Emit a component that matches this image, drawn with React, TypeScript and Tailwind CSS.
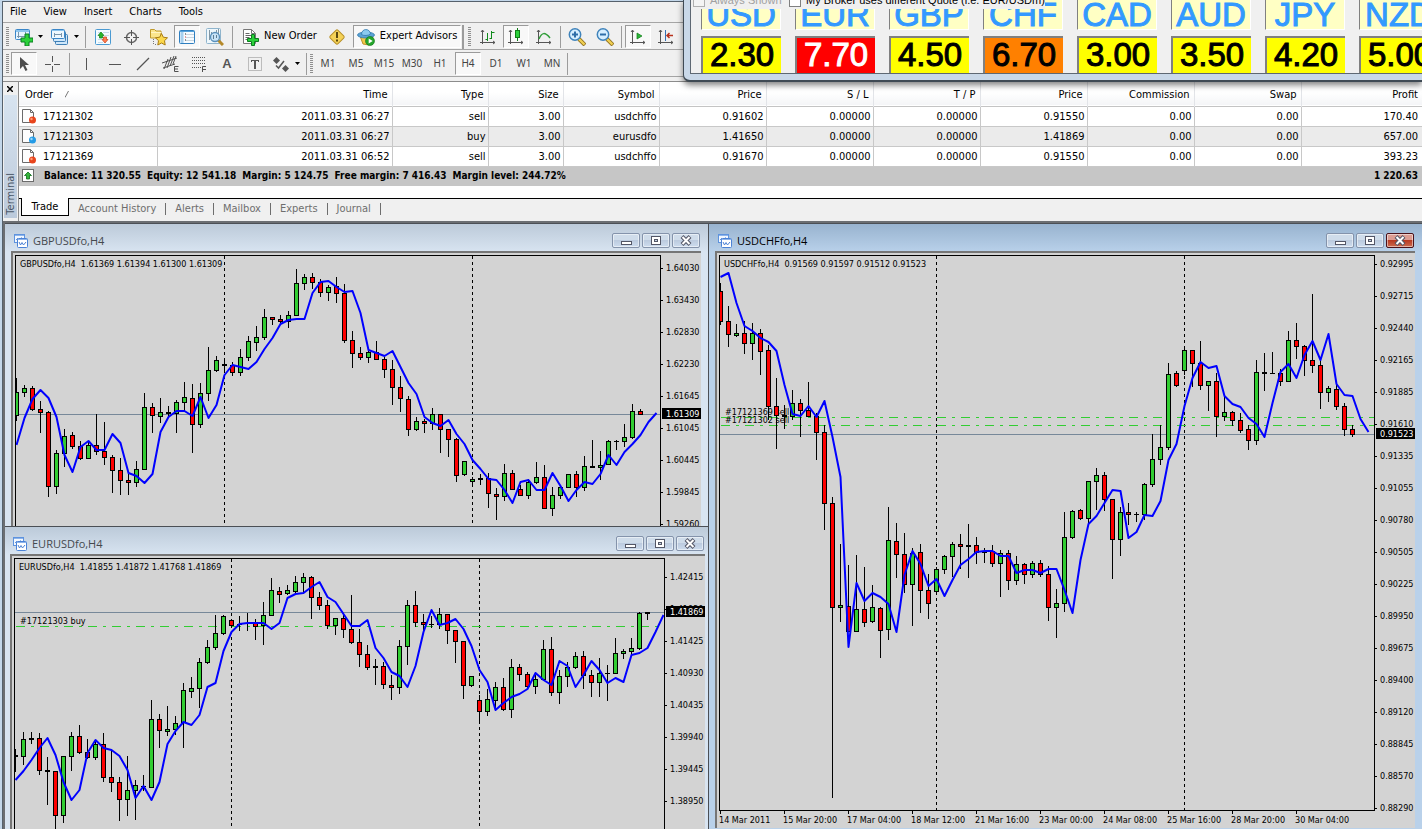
import type { ReactNode } from "react";
import { clsx } from "clsx";

// [high, body top, body bottom, low, kind] in pixels from the top of the window
type Candle = [number, number, number, number, "u" | "d" | "x"];

const gbpCandles: Candle[] = [
    [153, 167, 191, 196, "u"], [160, 163, 168, 172, "u"], [161, 163, 185, 186, "d"], [176, 184, 188, 208, "d"],
    [186, 187, 262, 272, "d"], [225, 228, 262, 269, "u"], [204, 211, 229, 242, "u"], [207, 210, 222, 224, "d"],
    [216, 221, 234, 235, "d"], [217, 220, 234, 234, "u"], [189, 220, 227, 230, "d"], [197, 226, 233, 240, "d"],
    [230, 232, 246, 268, "d"], [233, 245, 256, 270, "d"], [247, 255, 258, 270, "d"], [236, 244, 258, 262, "u"],
    [168, 182, 245, 245, "u"], [178, 182, 191, 208, "d"], [173, 187, 192, 198, "u"], [181, 187, 189, 192, "x"],
    [175, 177, 189, 208, "u"], [157, 172, 178, 187, "u"], [159, 173, 200, 228, "d"], [158, 168, 200, 203, "u"],
    [122, 145, 169, 176, "u"], [131, 135, 146, 147, "u"], [135, 139, 141, 145, "x"], [137, 140, 148, 151, "d"],
    [124, 132, 148, 151, "u"], [111, 116, 133, 136, "u"], [101, 112, 118, 126, "u"], [84, 92, 113, 115, "u"],
    [92, 92, 95, 100, "d"], [90, 94, 97, 98, "d"], [86, 90, 97, 103, "u"], [44, 58, 91, 91, "u"],
    [49, 52, 59, 65, "u"], [48, 52, 58, 64, "d"], [54, 57, 68, 72, "d"], [60, 62, 68, 76, "u"],
    [52, 61, 69, 78, "d"], [59, 68, 116, 118, "d"], [106, 115, 129, 143, "d"], [122, 128, 133, 135, "d"],
    [126, 127, 133, 138, "u"], [116, 127, 135, 135, "d"], [132, 134, 145, 153, "d"], [135, 144, 163, 180, "d"],
    [151, 162, 174, 187, "d"], [171, 174, 205, 211, "d"], [192, 196, 205, 206, "u"], [194, 196, 199, 208, "d"],
    [183, 189, 199, 205, "u"], [189, 189, 205, 228, "d"], [204, 204, 215, 232, "d"], [213, 214, 251, 257, "d"],
    [236, 236, 250, 251, "u"], [252, 254, 257, 261, "u"], [249, 253, 255, 260, "x"], [248, 253, 269, 283, "d"],
    [263, 269, 272, 295, "d"], [239, 248, 272, 276, "u"], [245, 248, 265, 265, "d"], [260, 264, 271, 271, "d"],
    [254, 257, 271, 274, "u"], [237, 252, 258, 259, "u"], [240, 252, 284, 284, "d"], [262, 270, 284, 291, "u"],
    [261, 262, 271, 274, "u"], [249, 249, 263, 263, "u"], [246, 249, 263, 272, "d"], [231, 241, 263, 266, "u"],
    [215, 241, 243, 243, "x"], [226, 240, 243, 255, "u"], [215, 216, 240, 240, "u"], [215, 216, 217, 225, "x"],
    [199, 212, 217, 222, "u"], [179, 186, 213, 214, "u"], [184, 186, 190, 190, "d"],
];

const gbpAverage = [
    220, 193, 174, 165, 173, 192, 230, 247, 222, 216, 225, 225, 209, 218, 248, 251, 258, 249, 207, 192, 186, 186, 191,
    172, 193, 180, 150, 140, 142, 144, 137, 124, 113, 99, 95, 94, 94, 68, 57, 56, 62, 67, 66, 88, 125, 128, 131, 126,
    142, 158, 169, 192, 198, 201, 195, 209, 219, 235, 244, 254, 255, 265, 278, 257, 255, 265, 265, 248, 261, 276, 265,
    257, 259, 249, 230, 240, 227, 219, 210, 197, 188,
];

const eurCandles: Candle[] = [
    [224, 230, 232, 247, "x"], [207, 214, 232, 240, "u"], [207, 213, 215, 219, "x"], [208, 213, 246, 250, "d"],
    [232, 245, 247, 280, "x"], [246, 246, 291, 304, "d"], [231, 231, 291, 298, "u"], [207, 211, 232, 246, "u"],
    [200, 211, 228, 229, "d"], [214, 227, 233, 234, "d"], [215, 219, 233, 235, "u"], [208, 219, 253, 257, "d"],
    [226, 252, 258, 267, "d"], [252, 257, 275, 296, "d"], [231, 265, 275, 291, "u"], [255, 260, 266, 295, "u"],
    [250, 261, 262, 266, "x"], [175, 194, 263, 263, "u"], [189, 194, 206, 223, "d"], [181, 204, 207, 211, "u"],
    [191, 198, 205, 210, "u"], [158, 165, 198, 223, "u"], [152, 163, 167, 173, "u"], [133, 137, 164, 183, "u"],
    [115, 122, 138, 139, "u"], [90, 108, 123, 125, "u"], [90, 91, 109, 110, "u"], [95, 95, 101, 101, "d"],
    [91, 99, 100, 106, "x"], [88, 98, 99, 106, "x"], [94, 98, 102, 115, "d"], [77, 90, 101, 120, "u"],
    [53, 65, 91, 91, "u"], [62, 66, 70, 78, "d"], [60, 65, 69, 70, "u"], [51, 57, 67, 70, "u"],
    [48, 52, 58, 68, "u"], [51, 52, 73, 94, "d"], [67, 72, 81, 85, "d"], [75, 80, 101, 104, "d"],
    [93, 93, 101, 110, "u"], [89, 93, 105, 113, "d"], [70, 104, 118, 119, "d"], [104, 117, 130, 142, "d"],
    [120, 129, 143, 145, "d"], [134, 141, 143, 160, "x"], [137, 141, 160, 164, "d"], [150, 160, 163, 175, "d"],
    [115, 121, 163, 169, "u"], [75, 80, 122, 140, "u"], [66, 80, 98, 102, "d"], [89, 97, 100, 107, "d"],
    [91, 99, 100, 103, "x"], [83, 89, 100, 104, "u"], [89, 89, 106, 119, "d"], [105, 105, 117, 138, "d"],
    [116, 116, 161, 174, "d"], [151, 151, 161, 162, "u"], [170, 175, 187, 198, "d"], [164, 174, 187, 191, "u"],
    [157, 162, 176, 185, "u"], [153, 162, 185, 186, "d"], [134, 142, 185, 193, "u"], [139, 142, 150, 156, "d"],
    [147, 149, 162, 163, "d"], [150, 154, 162, 169, "u"], [115, 124, 155, 155, "u"], [112, 124, 168, 171, "d"],
    [145, 151, 168, 179, "u"], [137, 142, 152, 162, "u"], [127, 131, 143, 144, "u"], [126, 131, 151, 164, "d"],
    [145, 150, 158, 172, "d"], [133, 148, 158, 172, "u"], [140, 148, 149, 176, "x"], [113, 128, 149, 149, "u"],
    [124, 126, 129, 134, "u"], [113, 123, 127, 129, "u"], [87, 88, 124, 125, "u"], [87, 87, 89, 95, "x"],
];

const eurAverage = [
    255, 246, 235, 223, 213, 230, 257, 275, 265, 228, 215, 223, 225, 231, 245, 273, 261, 275, 257, 219, 206, 197, 200,
    190, 162, 158, 126, 107, 99, 98, 98, 98, 104, 98, 73, 69, 68, 62, 57, 72, 77, 89, 101, 101, 95, 123, 133, 147, 151,
    162, 141, 107, 85, 100, 98, 94, 104, 121, 145, 157, 185, 178, 172, 169, 164, 148, 155, 160, 136, 141, 162, 150, 136,
    145, 158, 153, 157, 130, 128, 123, 107, 90,
];

const chfCandles: Candle[] = [
    [58, 66, 97, 100, "d"], [81, 96, 110, 122, "d"], [99, 108, 111, 112, "u"], [96, 108, 119, 129, "d"],
    [98, 108, 119, 135, "u"], [104, 108, 127, 150, "d"], [120, 125, 182, 195, "d"], [153, 181, 191, 224, "d"],
    [180, 190, 192, 204, "x"], [165, 178, 192, 195, "u"], [174, 178, 186, 212, "d"], [157, 185, 192, 192, "d"],
    [188, 191, 208, 235, "d"], [200, 207, 279, 305, "d"], [272, 278, 383, 573, "d"], [319, 380, 383, 397, "u"],
    [340, 381, 407, 407, "d"], [330, 384, 407, 407, "u"], [342, 384, 398, 402, "d"], [360, 382, 397, 398, "u"],
    [382, 383, 406, 433, "d"], [282, 315, 405, 415, "u"], [298, 316, 330, 353, "d"], [308, 329, 360, 368, "d"],
    [323, 328, 360, 401, "u"], [319, 327, 366, 388, "d"], [349, 365, 379, 394, "d"], [342, 344, 367, 369, "u"],
    [330, 331, 345, 349, "u"], [317, 319, 332, 352, "u"], [309, 319, 322, 344, "d"], [299, 320, 322, 353, "x"],
    [312, 320, 328, 339, "d"], [323, 327, 328, 338, "x"], [320, 326, 339, 342, "d"], [325, 328, 339, 372, "u"],
    [325, 328, 356, 365, "d"], [331, 339, 356, 360, "u"], [338, 339, 350, 359, "d"], [336, 338, 350, 353, "u"],
    [335, 338, 350, 352, "d"], [341, 349, 383, 396, "d"], [364, 378, 383, 413, "u"], [287, 312, 379, 387, "u"],
    [285, 286, 313, 314, "u"], [284, 285, 294, 295, "d"], [256, 256, 294, 298, "u"], [243, 250, 257, 285, "u"],
    [247, 250, 275, 286, "d"], [274, 274, 315, 354, "d"], [282, 287, 315, 331, "u"], [278, 287, 290, 300, "d"],
    [287, 289, 290, 297, "x"], [258, 259, 290, 295, "u"], [209, 234, 260, 262, "u"], [200, 222, 235, 240, "u"],
    [138, 149, 223, 225, "u"], [146, 148, 161, 162, "d"], [121, 125, 146, 150, "u"], [125, 125, 139, 162, "d"],
    [116, 138, 161, 165, "d"], [156, 156, 161, 186, "u"], [148, 156, 192, 212, "d"], [170, 187, 192, 196, "u"],
    [186, 187, 196, 201, "d"], [188, 195, 206, 208, "d"], [200, 204, 216, 225, "d"], [135, 147, 216, 220, "u"],
    [128, 147, 149, 166, "x"], [127, 148, 149, 149, "x"], [144, 148, 157, 161, "d"], [106, 115, 157, 157, "u"],
    [98, 115, 122, 134, "d"], [120, 121, 136, 151, "d"], [69, 135, 141, 148, "d"], [134, 140, 168, 184, "d"],
    [161, 163, 168, 177, "u"], [160, 164, 182, 185, "d"], [178, 181, 205, 211, "d"], [200, 204, 210, 212, "d"],
];

const chfAverage = [
    52, 48, 78, 101, 106, 113, 117, 126, 160, 189, 191, 181, 192, 176, 212, 252, 422, 358, 376, 368, 372, 379, 407, 350,
    326, 339, 361, 354, 371, 355, 340, 334, 327, 326, 326, 331, 331, 348, 345, 345, 348, 344, 344, 365, 388, 335, 299,
    291, 278, 265, 266, 313, 307, 290, 291, 276, 235, 219, 181, 153, 137, 143, 141, 171, 179, 182, 193, 199, 212, 178,
    147, 139, 153, 130, 116, 135, 109, 159, 170, 171, 194, 207,
];

type ChartData = {
    title: string;
    quote: string;
    candles: Candle[];
    average: number[];
    top: number;
    days: number[];
    bid: number;
    bidLabel: string;
    orders: { y: number; label: string; labelY: number }[];
    firstTick: number;
    prices: string[];
    times?: string[];
};

const gbp: ChartData = {
    title: "GBPUSDfo,H4",
    quote: "1.61369 1.61394 1.61300 1.61309",
    candles: gbpCandles,
    average: gbpAverage,
    top: 31,
    days: [26, 57],
    bid: 189,
    bidLabel: "1.61309",
    orders: [],
    firstTick: 43,
    prices: ["1.64030", "1.63430", "1.62830", "1.62230", "1.61645", "1.61045", "1.60445", "1.59845", "1.59260"],
};

const eur: ChartData = {
    title: "EURUSDfo,H4",
    quote: "1.41855 1.41872 1.41768 1.41869",
    candles: eurCandles,
    average: eurAverage,
    top: 34,
    days: [27, 58],
    bid: 87,
    bidLabel: "1.41869",
    orders: [{ y: 101, label: "#17121303 buy", labelY: 99 }],
    firstTick: 52,
    prices: ["1.42415", "1.41920", "1.41425", "1.40930", "1.40435", "1.39940", "1.39445", "1.38950"],
};

const chf: ChartData = {
    title: "USDCHFfo,H4",
    quote: "0.91569 0.91597 0.91512 0.91523",
    candles: chfCandles,
    average: chfAverage,
    top: 31,
    days: [27, 58],
    bid: 209,
    bidLabel: "0.91523",
    orders: [
        { y: 192, label: "#17121369 sell", labelY: 190 },
        { y: 200, label: "#17121302 sell", labelY: 198 },
    ],
    firstTick: 39,
    prices: [
        "0.92995", "0.92715", "0.92440", "0.92165", "0.91885", "0.91610", "0.91335", "0.91055", "0.90780",
        "0.90505", "0.90225", "0.89950", "0.89675", "0.89400", "0.89120", "0.88845", "0.88570", "0.88290",
    ],
    times: [
        "14 Mar 2011", "15 Mar 20:00", "17 Mar 04:00", "18 Mar 12:00", "21 Mar 16:00",
        "23 Mar 00:00", "24 Mar 08:00", "25 Mar 16:00", "28 Mar 20:00", "30 Mar 04:00",
    ],
};

function Plot({ data }: { data: ChartData }) {
    return (
        <svg
            width="1600"
            height="1200"
            viewBox={`0 ${data.top} 1600 1200`}
            className="block max-w-none text-[9px]"
            shapeRendering="crispEdges"
        >
            {data.days.map((d) => (
                <line
                    key={d}
                    x1={d * 8 + 0.5}
                    x2={d * 8 + 0.5}
                    y1={data.top}
                    y2={1200}
                    stroke="#000"
                    strokeDasharray="3 3"
                />
            ))}
            <line x1="0" x2="1600" y1={data.bid + 0.5} y2={data.bid + 0.5} stroke="#778899" />
            {data.orders.map((o) => (
                <g key={o.label}>
                    <line
                        x1="1"
                        x2="1600"
                        y1={o.y + 0.5}
                        y2={o.y + 0.5}
                        stroke="#32cd32"
                        strokeDasharray="9 6 3 6"
                    />
                    <text x="5" y={o.labelY}>
                        {o.label}
                    </text>
                </g>
            ))}
            {data.candles.map(([high, top, bottom, low, kind], i) => (
                <g key={i}>
                    <rect x={i * 8} y={high} width="1" height={Math.max(low - high, 1)} fill="#000" />
                    {kind === "x" ? (
                        <rect x={i * 8 - 2} y={top} width="5" height={bottom - top} fill="#000" />
                    ) : (
                        <rect
                            x={i * 8 - 1.5}
                            y={top + 0.5}
                            width="4"
                            height={Math.max(bottom - top - 1, 1)}
                            fill={kind === "u" ? "#32cd32" : "#ff0000"}
                            stroke="#000"
                        />
                    )}
                </g>
            ))}
            <polyline
                points={data.average.map((y, i) => `${i * 8 + 0.5},${y}`).join(" ")}
                fill="none"
                stroke="#0000ff"
                strokeWidth="2"
                strokeLinejoin="round"
                shapeRendering="auto"
            />
            <text x="4" y={data.top + 11} xmlSpace="preserve">
                {data.title + "  " + data.quote}
            </text>
        </svg>
    );
}

function PriceAxis({ data }: { data: ChartData }) {
    return (
        <svg
            width="40"
            height="1200"
            viewBox={`0 ${data.top - 1} 40 1200`}
            className="block text-[9px]"
            shapeRendering="crispEdges"
        >
            {data.prices.map((price, i) => {
                const y = data.firstTick + i * 32;
                return (
                    <g key={price}>
                        <rect x="0" y={y} width="2" height="1" />
                        <text x="5" y={y + 3}>
                            {price}
                        </text>
                    </g>
                );
            })}
            <rect x="1" y={data.bid - 6} width="39" height="11" />
            <text x="5" y={data.bid + 3} fill="#fff">
                {data.bidLabel}
            </text>
        </svg>
    );
}

function TimeAxis({ times }: { times: string[] }) {
    return (
        <svg width="700" height="17" className="block max-w-none text-[9px]" shapeRendering="crispEdges">
            {times.map((time, i) => (
                <g key={time}>
                    <rect x={i * 64 + 1} y="0" width="1" height="3" />
                    <text x={i * 64} y="12">
                        {time}
                    </text>
                </g>
            ))}
        </svg>
    );
}

function WindowButton({ label, active, children }: { label: string; active?: boolean; children: ReactNode }) {
    return (
        <button
            aria-label={label}
            className={clsx(
                "flex h-[15px] w-7 items-center justify-center rounded-[2px] border shadow-[inset_0_0_0_1px_rgba(255,255,255,0.5)]",
                active
                    ? "border-[#4a1119] bg-[linear-gradient(#dc9c92_45%,#b93a22_50%,#cb6c50)]"
                    : "border-[#8493ab] bg-[linear-gradient(#cfdcea_45%,#bccbdf_50%,#cddcee)]"
            )}
        >
            <svg width="14" height="11" viewBox="0 0 14 11">
                {children}
            </svg>
        </button>
    );
}

function ChartIcon() {
    return (
        <svg width="14" height="14" viewBox="0 0 14 14" fill="none">
            <rect x="0.5" y="0.5" width="10" height="8" fill="#f2f8ff" stroke="#5e93de" />
            <path d="M1 1.500h9" stroke="#8db4ea" />
            <path d="M2 5.500h2M3.500 4v3M6 5l2-1.500" stroke="#5e93de" />
            <rect x="3.500" y="4.500" width="10" height="9" rx="1" fill="#fff" stroke="#4b82d6" />
            <path d="M4 5.500h9" stroke="#8db4ea" />
            <path d="M5 8l1.500 3L8 8.500 9.500 11 12 8" stroke="#4b82d6" />
        </svg>
    );
}

function ChartWindow({ data, active, className }: { data: ChartData; active?: boolean; className: string }) {
    return (
        <section
            aria-label={data.title}
            className={clsx(
                "flex min-h-0 min-w-0 flex-col overflow-hidden border-t border-[#4b4f55]",
                active
                    ? "bg-[linear-gradient(#98b3cf,#b9d1ea_28px)]"
                    : "bg-[linear-gradient(#bccad9,#d8e4f1_28px)]",
                className
            )}
        >
            <header className="flex h-[27px] shrink-0 items-center gap-1 pt-[6px] pr-px pl-[3px]">
                <ChartIcon />
                <h2
                    className={clsx(
                        "flex-1 pl-px font-['Open_Sans','Noto_Sans',sans-serif] text-[11px] leading-4",
                        active ? "text-black" : "text-[#45494e]"
                    )}
                >
                    {data.title}
                </h2>
                <div className="flex gap-[2px]">
                    <WindowButton label="Minimize">
                        <rect x="2.500" y="6.500" width="10" height="3" fill="#fff" stroke="#535666" />
                    </WindowButton>
                    <WindowButton label="Maximize">
                        <rect x="2.500" y="1.500" width="9" height="8" fill="#fff" stroke="#535666" />
                        <rect x="5.500" y="4.500" width="3" height="2" fill="#c5d3e4" stroke="#535666" />
                    </WindowButton>
                    <WindowButton label="Close" active={active}>
                        <path d="M3 1.500l8 8M11 1.500l-8 8" stroke="#535666" strokeWidth="4" />
                        <path d="M3.500 2l7 7M10.500 2l-7 7" stroke="#fff" strokeWidth="2" />
                    </WindowButton>
                </div>
            </header>
            <div className="flex min-h-0 flex-1 border-t-2 border-l-2 border-[#767676] bg-[#d3d3d3] pt-[2px] pl-[2px]">
                <div className="flex min-w-0 flex-1 flex-col">
                    <div
                        className={clsx(
                            "min-h-0 flex-1 overflow-hidden border-x border-t border-black",
                            data.times && "border-b"
                        )}
                    >
                        <Plot data={data} />
                    </div>
                    {data.times && (
                        <div className="h-[17px] overflow-hidden">
                            <TimeAxis times={data.times} />
                        </div>
                    )}
                </div>
                <div className="w-10 shrink-0 overflow-hidden">
                    <PriceAxis data={data} />
                </div>
            </div>
        </section>
    );
}

function Grip({ className }: { className?: string }) {
    return (
        <span
            className={clsx(
                "h-5 w-[3px] shrink-0 bg-[repeating-linear-gradient(#8f8f8f_0px,#8f8f8f_1px,#f0f0f0_1px,#f0f0f0_2px)]",
                className ?? "mr-px ml-[3px]"
            )}
        />
    );
}

function Separator({ className }: { className?: string }) {
    return <span className={clsx("h-[22px] w-px shrink-0 bg-[#9c9c9c]", className ?? "mx-[3px]")} />;
}

function ToolButton({
    label,
    pressed,
    className,
    children,
}: {
    label: string;
    pressed?: boolean;
    className?: string;
    children: ReactNode;
}) {
    return (
        <button
            aria-label={label}
            aria-pressed={pressed}
            className={clsx("flex h-6 shrink-0 items-center justify-center px-px", className ?? "w-7")}
        >
            <span
                className={clsx(
                    "flex h-[23px] flex-1 items-center justify-center",
                    pressed && "border border-t-[#9a9a9a] border-r-white border-b-white border-l-[#9a9a9a] bg-[#f8f8f8]"
                )}
            >
                {children}
            </span>
        </button>
    );
}

function Caret() {
    return (
        <svg width="5" height="3" viewBox="0 0 5 3" className="ml-[5px] shrink-0">
            <path d="M0 0h5L2.500 3z" />
        </svg>
    );
}

function Icon({ children, size = 18 }: { children: ReactNode; size?: number }) {
    return (
        <svg width={size} height={size} viewBox="0 0 18 18" fill="none" className="shrink-0">
            {children}
        </svg>
    );
}

const plus = "M9.500 6.500h3v4h4v3h-4v4h-3v-4h-4v-3h4z";

function Magnifier({ sign }: { sign: string }) {
    return (
        <Icon>
            <path d="M11 11l6 6" stroke="#8f7020" strokeWidth="4" />
            <path d="M11 11l5.500 5.500" stroke="#f0cf52" strokeWidth="2.400" />
            <circle cx="7" cy="6.500" r="5.700" fill="#d6efff" stroke="#3f83bb" strokeWidth="1.500" />
            <path d={sign} stroke="#2e6ea8" strokeWidth="2" />
        </Icon>
    );
}

function Axes({ children }: { children: ReactNode }) {
    return (
        <Icon>
            <path d="M3.500 2v14M1 14.500h15M2 4l1.500-2L5 4M14 13l2 1.500-2 1.500" stroke="#555" />
            {children}
        </Icon>
    );
}

function MainToolbar() {
    return (
        <div className="flex h-[27px] items-center border-b border-[#a5a5a5] pt-px">
            <Grip />
            <ToolButton label="New chart" className="w-[38px]">
                <Icon>
                    <rect x="0.500" y="1.500" width="14" height="10" rx="1" fill="#e6f4ff" stroke="#3a86c8" />
                    <path d="M1 3h13" stroke="#8cc4ee" strokeWidth="2" />
                    <path d="M3.500 4v6M2 8.500h10M10.500 4v6" stroke="#7a96ac" />
                    <path d="M10 6h4v4h4v4h-4v4h-4v-4H6v-4h4z" fill="#2bd13a" stroke="#0b7d20" />
                </Icon>
                <Caret />
            </ToolButton>
            <ToolButton label="Profiles" className="w-[34px]">
                <Icon>
                    <rect x="4.500" y="6.500" width="12" height="10" rx="1" fill="#cfe7fa" stroke="#3f7fb5" />
                    <rect x="2.500" y="3.500" width="12" height="10" rx="1" fill="#cfe7fa" stroke="#3f7fb5" />
                    <rect x="0.500" y="1.500" width="13" height="9" rx="1" fill="#eef8ff" stroke="#3a86c8" />
                    <path d="M1 2.500h12" stroke="#8cc4ee" />
                    <path d="M3.500 5v4M10.500 5v4M3 6.500h8" stroke="#7a96ac" />
                </Icon>
                <Caret />
            </ToolButton>
            <Separator />
            <ToolButton label="Market Watch">
                <Icon>
                    <rect x="1.500" y="1.500" width="15" height="15" rx="1" fill="#f4fbff" stroke="#4a9ad2" />
                    <path d="M4 4.500h3M9 4.500h6M11 7.500h4M4 11.500h4M4 14.500h5" stroke="#c5dbe9" />
                    <path d="M7 4l3 3.500H8.500V10h-3V7.500H4z" fill="#28b528" stroke="#0f7d16" strokeWidth="0.700" />
                    <path d="M11 15l-3-3.500h1.500V9h3v2.500H14z" fill="#ff7d50" stroke="#c73d14" strokeWidth="0.700" />
                </Icon>
            </ToolButton>
            <ToolButton label="Data Window">
                <Icon>
                    <circle cx="9.500" cy="9.500" r="5" stroke="#666" strokeWidth="1.500" />
                    <path d="M9.500 2v6M9.500 11v6M2 9.500h6M11 9.500h6" stroke="#555" />
                </Icon>
            </ToolButton>
            <ToolButton label="Navigator">
                <Icon>
                    <path d="M.5 10V1.500h4L6 3h5v7z" fill="#fbe58c" stroke="#c09a2c" />
                    <path d="M1 4.500h10" stroke="#fff5c4" />
                    <path d="M3.500 11v5M5 16.500h2" stroke="#777" strokeDasharray="1 1" />
                    <path
                        d="M11.500 5.500l1.800 3.700 4.200.6-3 2.900.7 4.300-3.700-2-3.700 2 .7-4.300-3-2.900 4.200-.6z"
                        fill="#fbd84c"
                        stroke="#a97c13"
                    />
                </Icon>
            </ToolButton>
            <ToolButton label="Terminal" pressed>
                <Icon>
                    <rect x="1.500" y="2.500" width="15" height="13" rx="1" fill="#f6fbff" stroke="#2f7fc0" />
                    <path d="M2 3.500h14" stroke="#56a3dc" />
                    <path d="M4 4v11" stroke="#a6cfee" strokeWidth="3" />
                    <path d="M8 6.500h8M8 9.500h8M8 12.500h8" stroke="#c9d5de" />
                    <path d="M7.500 5.500v1M7.500 11.500v1" stroke="#222" />
                    <path d="M7.500 8.500v1" stroke="#d33" />
                </Icon>
            </ToolButton>
            <ToolButton label="Strategy Tester">
                <Icon>
                    <rect x="0.500" y="0.500" width="14" height="15" rx="1" fill="#eef7fc" stroke="#8fb4cc" />
                    <path d="M3.500 2v10M5.500 4v4M10.500 2v4M12.500 1v5" stroke="#8296a4" />
                    <path d="M12 12l5 5" stroke="#b5892a" strokeWidth="3" />
                    <circle cx="9" cy="9" r="4.500" fill="#c9e4f8" stroke="#5a90bb" strokeWidth="1.300" />
                    <path d="M7.500 7v4M10.500 7v3" stroke="#5d7c93" />
                </Icon>
            </ToolButton>
            <Separator />
            <button className="mr-[6px] ml-[6px] flex h-6 items-center gap-[4px] text-[11px]">
                <Icon>
                    <path d="M1.500 1.500h8l4 4v10h-12z" fill="#fff" stroke="#777" />
                    <path d="M9.500 1.500v4h4" stroke="#777" />
                    <path d="M3.500 5.500h4M3.500 7.500h7M3.500 9.500h4M3.500 11.500h4" stroke="#666" />
                    <path d={plus} fill="#2bd13a" stroke="#0b7d20" />
                </Icon>
                New Order
            </button>
            <ToolButton label="MetaEditor">
                <Icon>
                    <rect
                        x="3.500"
                        y="3.500"
                        width="11"
                        height="11"
                        rx="1.500"
                        transform="rotate(45 9 9)"
                        fill="#f5d257"
                        stroke="#b8922c"
                    />
                    <path d="M9 4v6M9 11.500v2" stroke="#5b480f" strokeWidth="2" />
                </Icon>
            </ToolButton>
            <button
                aria-pressed="true"
                className="ml-[2px] flex h-[23px] items-center gap-[5px] border border-t-[#9a9a9a] border-r-white border-b-white border-l-[#9a9a9a] bg-[#f8f8f8] px-[3px] text-[11px]"
            >
                <Icon>
                    <path d="M3 8l3 8 6 1 4-8z" fill="#f3c84a" stroke="#bb922a" />
                    <ellipse cx="9" cy="7" rx="8.500" ry="3" fill="#5ba3d5" stroke="#3078ad" strokeWidth="0.800" />
                    <path d="M4.500 6.500C4.500 0 13 0 13.500 6c-2 1.800-7 2-9 .5z" fill="#8ccbf0" stroke="#3078ad" strokeWidth="0.800" />
                    <circle cx="13" cy="13" r="4.500" fill="#26a52c" stroke="#0d7518" strokeWidth="0.600" />
                    <path d="M11.700 10.500v5l4-2.500z" fill="#fff" />
                </Icon>
                Expert Advisors
            </button>
            <span className="mx-px h-6 w-[2px] shrink-0 bg-[#9c9c9c]" />
            <Grip className="mx-[3px]" />
            <ToolButton label="Bar Chart">
                <Axes>
                    <path d="M8.500 5v8M6.500 11.500h2M12.500 3v8M10.500 10.500h2M12.500 4.500h3" stroke="#0f8a1b" />
                </Axes>
            </ToolButton>
            <ToolButton label="Candlesticks" pressed>
                <Axes>
                    <path d="M10.500 0v13" stroke="#0f7d16" />
                    <rect x="8.500" y="2.500" width="4" height="7" fill="#2bd13a" stroke="#0f7d16" />
                </Axes>
            </ToolButton>
            <ToolButton label="Line Chart">
                <Axes>
                    <path d="M4 11c3-7 6-7 11-1" stroke="#2f9d38" strokeWidth="1.500" />
                </Axes>
            </ToolButton>
            <Separator className="mx-[2px]" />
            <ToolButton label="Zoom In">
                <Magnifier sign="M4 6.500h6M7 3.500v6" />
            </ToolButton>
            <ToolButton label="Zoom Out">
                <Magnifier sign="M4 6.500h6" />
            </ToolButton>
            <Separator className="mx-[2px]" />
            <ToolButton label="Auto Scroll" pressed>
                <Axes>
                    <path d="M8 5v6l5-3z" fill="#2bb53a" stroke="#0f7d16" strokeWidth="0.700" />
                </Axes>
            </ToolButton>
            <ToolButton label="Chart Shift">
                <Axes>
                    <path d="M8.500 2v11" stroke="#3471b5" />
                    <path d="M16 7.500h-6M12.500 5L10 7.500l2.500 2.500" stroke="#b8321d" strokeWidth="1.500" />
                </Axes>
            </ToolButton>
        </div>
    );
}

const periods = ["M1", "M5", "M15", "M30", "H1", "H4", "D1", "W1", "MN"];

function DrawToolbar() {
    return (
        <div className="flex h-[27px] items-center border-b border-[#a5a5a5] pt-px">
            <Grip />
            <ToolButton label="Cursor" pressed>
                <Icon>
                    <path d="M5 2v12l3-3 2.500 5 2-1L10 10h4z" fill="#4d4d4d" />
                </Icon>
            </ToolButton>
            <ToolButton label="Crosshair">
                <Icon>
                    <path d="M9.500 1v6M9.500 11v6M2 9.500h6M11 9.500h6" stroke="#555" />
                </Icon>
            </ToolButton>
            <Separator />
            <ToolButton label="Vertical Line">
                <Icon>
                    <path d="M8.500 3v12" stroke="#555" />
                </Icon>
            </ToolButton>
            <ToolButton label="Horizontal Line">
                <Icon>
                    <path d="M3 9.500h12" stroke="#555" />
                </Icon>
            </ToolButton>
            <ToolButton label="Trendline">
                <Icon>
                    <path d="M3 15L15 3" stroke="#555" strokeWidth="1.200" />
                </Icon>
            </ToolButton>
            <ToolButton label="Equidistant Channel">
                <Icon>
                    <path d="M0 8L15 3M1 13l12-4M2 14l4-10M5 13l4-11M8 11l4-10M11 9l3-8" stroke="#505050" />
                    <path d="M16.500 11.500h-4v5h4M13 14h3" stroke="#505050" />
                </Icon>
            </ToolButton>
            <ToolButton label="Fibonacci Retracement">
                <Icon>
                    <path d="M2 2.500h14M2 5.500h14M2 8.500h14M2 12.500h10" stroke="#555" strokeDasharray="1 1" />
                    <path d="M16 11.500h-3.500V17M13 14.500h3" stroke="#505050" />
                </Icon>
            </ToolButton>
            <ToolButton label="Text">
                <span className="font-['Liberation_Sans',sans-serif] text-[13px] font-bold text-[#555]">A</span>
            </ToolButton>
            <ToolButton label="Text Label">
                <Icon>
                    <rect x="2.500" y="2.500" width="13" height="13" stroke="#888" strokeDasharray="1 1" />
                    <path d="M5 5.500h8M5.500 5v2M12.500 5v2" stroke="#555" />
                    <path d="M9 5v9" stroke="#555" strokeWidth="2" />
                </Icon>
            </ToolButton>
            <ToolButton label="Arrows" className="w-[34px]">
                <Icon>
                    <path d="M1 5.500l3.500-3.500L8 5.500 4.500 9z" fill="#555" />
                    <path d="M10 13.500l3.500-3.500 3.500 3.500-3.500 3.500z" fill="#555" />
                    <path d="M4 10.500l2.500 2.500L12 6" stroke="#555" strokeWidth="1.500" />
                </Icon>
                <Caret />
            </ToolButton>
            <Separator />
            <Grip className="mr-px" />
            {periods.map((p) => (
                <ToolButton key={p} label={p} pressed={p === "H4"}>
                    <span className="font-['Noto_Sans',sans-serif] text-[10px] text-[#444]">{p}</span>
                </ToolButton>
            ))}
            <Separator className="mx-px" />
        </div>
    );
}

const columns = [
    { name: "Order", width: "w-[138px]" },
    { name: "Time", width: "w-[235px]" },
    { name: "Type", width: "w-[96px]" },
    { name: "Size", width: "w-[75px]" },
    { name: "Symbol", width: "w-[96px]" },
    { name: "Price", width: "w-[107px]" },
    { name: "S / L", width: "w-[107px]" },
    { name: "T / P", width: "w-[107px]" },
    { name: "Price", width: "w-[107px]" },
    { name: "Commission", width: "w-[107px]" },
    { name: "Swap", width: "w-[107px]" },
    { name: "Profit", width: "w-auto" },
];

const orders = [
    ["17121302", "2011.03.31 06:27", "sell", "3.00", "usdchffo", "0.91602", "0.00000", "0.00000", "0.91550", "0.00", "0.00", "170.40"],
    ["17121303", "2011.03.31 06:27", "buy", "3.00", "eurusdfo", "1.41650", "0.00000", "0.00000", "1.41869", "0.00", "0.00", "657.00"],
    ["17121369", "2011.03.31 06:52", "sell", "3.00", "usdchffo", "0.91670", "0.00000", "0.00000", "0.91550", "0.00", "0.00", "393.23"],
];

function OrderIcon({ buy }: { buy: boolean }) {
    return (
        <svg width="14" height="15" viewBox="0 0 14 15" className="shrink-0">
            <path d="M.5.500h8l3 3v10H.5z" fill="#fdfdfd" stroke="#6b6b6b" />
            <path d="M8.500.500v3h3" fill="none" stroke="#6b6b6b" />
            <circle cx="10.500" cy="11" r="3.500" fill={buy ? "#249be6" : "#e8441c"} />
            <circle cx="9.500" cy="10" r="1.200" fill={buy ? "#9ad6fa" : "#ff9d78"} />
        </svg>
    );
}

function OrdersTable() {
    return (
        <table className="w-full table-fixed border-collapse bg-white">
            <thead>
                <tr className="h-6 border-b border-[#c4c4c4] bg-[linear-gradient(#ffffff_45%,#f4f5f7)]">
                    {columns.map((c, i) => (
                        <th
                            key={i}
                            className={clsx(
                                "border-r border-[#e2e4e8] p-0 pt-[2px] font-normal last:border-r-0",
                                c.width,
                                i === 0 ? "pl-[6px] text-left" : "pr-1 text-right"
                            )}
                        >
                            {c.name}
                            {i === 0 && (
                                <svg width="8" height="7" viewBox="0 0 8 7" className="ml-3 inline-block">
                                    <path d="M0 6.500L3.500 0" stroke="#777" fill="none" />
                                </svg>
                            )}
                        </th>
                    ))}
                </tr>
            </thead>
            <tbody>
                {orders.map((row, r) => (
                    <tr key={row[0]} className={clsx("h-5 border-b border-[#c8c8c8]", r === 1 && "bg-[#ebebeb]")}>
                        {row.map((cell, i) => (
                            <td
                                key={i}
                                className={clsx(
                                    "border-r border-[#c8c8c8] p-0 last:border-r-0",
                                    i === 0 ? "pt-px pl-[3px]" : "pt-[2px] pr-[2px] text-right last:pr-1"
                                )}
                            >
                                {i === 0 ? (
                                    <span className="flex items-center gap-[7px]">
                                        <OrderIcon buy={row[2] === "buy"} />
                                        {cell}
                                    </span>
                                ) : (
                                    cell
                                )}
                            </td>
                        ))}
                    </tr>
                ))}
            </tbody>
            <tfoot>
                <tr className="h-5 bg-[#c6c6c6] text-[10px] font-bold">
                    <td colSpan={11} className="p-0 pl-[3px]">
                        <span className="flex items-center gap-[9px]">
                            <svg width="13" height="14" viewBox="0 0 13 14">
                                <rect x="0.500" y="0.500" width="11" height="12" fill="#fff" stroke="#6b6b6b" />
                                <path d="M6 3l3.500 3.500h-2V10h-3V6.500h-2z" fill="#35b53c" stroke="#0d6d18" strokeWidth="0.800" />
                            </svg>
                            <span className="flex gap-[6px]">
                                <span>Balance: 11 320.55</span>
                                <span>Equity: 12 541.18</span>
                                <span>Margin: 5 124.75</span>
                                <span>Free margin: 7 416.43</span>
                                <span>Margin level: 244.72%</span>
                            </span>
                        </span>
                    </td>
                    <td className="p-0 pr-1 text-right">1 220.63</td>
                </tr>
            </tfoot>
        </table>
    );
}

const tabs = ["Account History", "Alerts", "Mailbox", "Experts", "Journal"];

function Terminal() {
    return (
        <section aria-label="Terminal" className="mt-1 flex border-t border-[#8c8c8c] text-[11px] leading-[14px]">
            <div className="flex w-[15px] shrink-0 flex-col items-center">
                <button aria-label="Close" className="flex h-[13px] w-full items-center justify-center pr-px">
                    <svg width="6" height="6" viewBox="0 0 6 6" stroke="#000" strokeWidth="1.500">
                        <path d="M0 0l6 6M6 0L0 6" />
                    </svg>
                </button>
                <div className="mb-[3px] flex w-[13px] flex-1 items-end bg-[linear-gradient(#d8e4f0,#bccadb)] pb-[3px]">
                    <span className="rotate-180 text-[11px] leading-[13px] text-[#4a5666] [writing-mode:vertical-rl]">
                        Terminal
                    </span>
                </div>
            </div>
            <div className="min-w-0 flex-1 border-l border-[#8c8c8c] bg-white">
                <OrdersTable />
                <div className="flex h-[35px] flex-col pt-3">
                    <div className="flex flex-1 border-t border-black bg-[#f0f0f0] text-[#6e6e6e]">
                        <button className="-mt-px ml-[2px] h-[18px] w-12 border-x border-b border-black bg-white text-black">
                            Trade
                        </button>
                        {tabs.map((t) => (
                            <button key={t} className="flex h-5 items-center pl-[9px]">
                                {t}
                                <span className="ml-[9px] h-3 w-px bg-[#6e6e6e]" />
                            </button>
                        ))}
                    </div>
                </div>
            </div>
        </section>
    );
}

const strengths = [
    { name: "USD", value: "2.30", color: "bg-[#ffff00] text-black" },
    { name: "EUR", value: "7.70", color: "bg-[#ff0000] text-white" },
    { name: "GBP", value: "4.50", color: "bg-[#ffff00] text-black" },
    { name: "CHF", value: "6.70", color: "bg-[#ff8000] text-black" },
    { name: "CAD", value: "3.00", color: "bg-[#ffff00] text-black" },
    { name: "AUD", value: "3.50", color: "bg-[#ffff00] text-black" },
    { name: "JPY", value: "4.20", color: "bg-[#ffff00] text-black" },
    { name: "NZD", value: "5.00", color: "bg-[#ffff00] text-black" },
];

// Floating strength meter, partly off the top right of the screen
function StrengthMeter() {
    return (
        <aside
            aria-label="Strength meter"
            className="absolute top-0 right-0 left-[683px] h-[82px] overflow-hidden rounded-bl-[7px] border-b-2 border-l border-[#3f4a54] bg-[#c9d8e8] pb-[6px] pl-[6px] font-['Liberation_Sans',sans-serif] shadow-[0_3px_6px_rgba(0,0,0,0.5)]"
        >
            <div className="relative h-[74px] overflow-hidden border-b border-l border-[#5e6873] bg-[#f0f0f0] pl-[10px]">
                <div className="flex gap-[14px]">
                    {strengths.map((s) => (
                        <div
                            key={s.name}
                            className="w-20 shrink-0 text-center text-[33px] leading-[38px] [-webkit-text-stroke:1px]"
                        >
                            <div className="flex h-[30px] items-center justify-center border-r border-b border-l border-r-white border-b-white border-l-[#808080] bg-[#ffffc4] text-[#3399ff]">
                                {s.name}
                            </div>
                            <div
                                className={clsx(
                                    "mt-[6px] flex h-[38px] items-center justify-center border-t-2 border-l-2 border-[#808080] pb-[2px]",
                                    s.color
                                )}
                            >
                                {s.value}
                            </div>
                        </div>
                    ))}
                </div>
                <div className="absolute top-0 left-0 flex h-[9px] w-[354px] items-end bg-[#f0f0f0] pb-[2px] pl-[2px] text-[11px] leading-[14px]">
                    <label className="flex w-24 items-end gap-[5px] text-[#a0a0a0]">
                        <input
                            type="checkbox"
                            defaultChecked
                            disabled
                            className="size-3 appearance-none border border-[#b0b0b0] bg-[#f4f4f4]"
                        />
                        Always Shown
                    </label>
                    <label className="flex items-end gap-[5px] whitespace-nowrap">
                        <input type="checkbox" className="size-3 appearance-none border border-[#808080] bg-white" />
                        My Broker uses different Quote (i.e. EUR/USDm)
                    </label>
                </div>
            </div>
        </aside>
    );
}

export default function App() {
    return (
        <main className="relative flex h-screen flex-col overflow-hidden bg-[#c3d7ea] pt-px pl-[2px] font-['DejaVu_Sans_Condensed','Noto_Sans',sans-serif] text-black">
            <div className="flex min-h-0 flex-1 flex-col border-t border-l border-[#56616c] bg-[#f0f0f0]">
                <nav className="flex h-[21px] items-center gap-[17px] border-b border-[#a5a5a5] pt-px pl-[7px] text-[11px]">
                    {["File", "View", "Insert", "Charts", "Tools"].map((m) => (
                        <button key={m}>{m}</button>
                    ))}
                </nav>
                <MainToolbar />
                <DrawToolbar />
                <Terminal />
                <div className="grid min-h-0 flex-1 grid-cols-[703fr_714fr] grid-rows-1 border-t-2 border-l-2 border-[#6b6e72]">
                    <div className="grid min-h-0 min-w-0 grid-rows-2">
                        <ChartWindow data={gbp} className="pr-[7px] pl-[6px]" />
                        <ChartWindow data={eur} className="pr-[3px] pl-[5px]" />
                    </div>
                    <ChartWindow data={chf} active className="border-l pr-[7px] pb-px pl-[6px]" />
                </div>
            </div>
            <StrengthMeter />
        </main>
    );
}
